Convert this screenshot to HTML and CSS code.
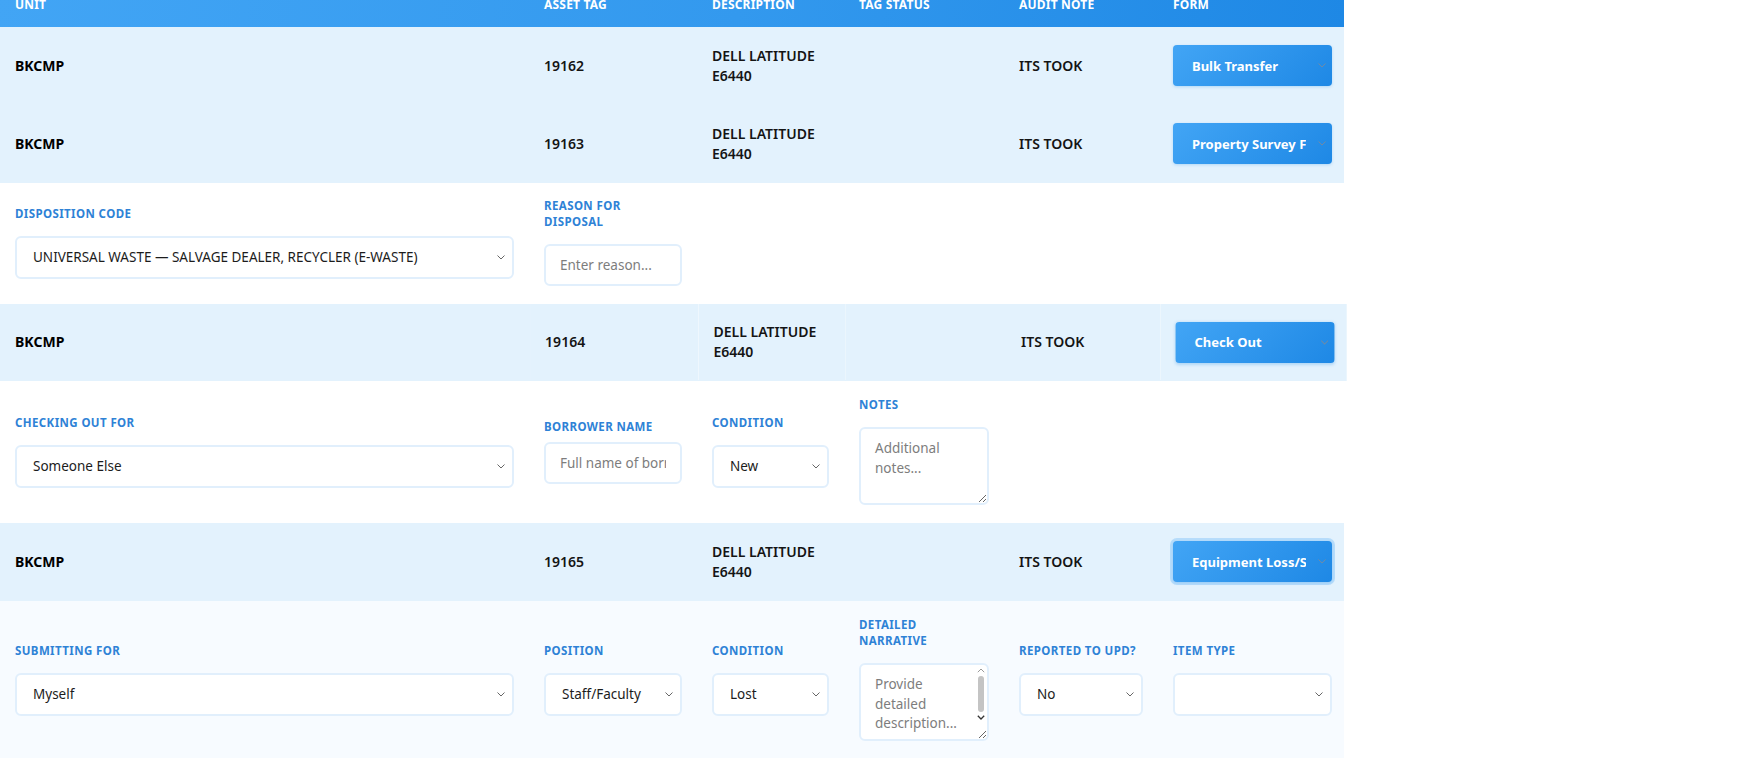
FILE: index.html
```html
<!DOCTYPE html>
<html lang="en">
<head>
<meta charset="utf-8">
<title>Asset Audit</title>
<link rel="stylesheet" href="styles.css">
</head>
<body>
<div class="page">
  <table class="grid">
    <colgroup>
      <col class="c-unit"><col class="c-tag"><col class="c-desc"><col class="c-status"><col class="c-note"><col class="c-form">
    </colgroup>
    <thead>
      <tr class="head">
        <th>Unit</th><th>Asset Tag</th><th>Description</th><th>Tag Status</th><th>Audit Note</th><th class="last">Form</th>
      </tr>
    </thead>
    <tbody>
      <tr class="row">
        <td class="unit">BKCMP</td><td>19162</td><td>DELL LATITUDE E6440</td><td></td><td>ITS TOOK</td>
        <td class="last"><select class="form-select"><option>Bulk Transfer</option></select></td>
      </tr>
      <tr class="row">
        <td class="unit">BKCMP</td><td>19163</td><td>DELL LATITUDE E6440</td><td></td><td>ITS TOOK</td>
        <td class="last"><select class="form-select"><option>Property Survey Form</option></select></td>
      </tr>
      <tr class="detail detail--compact">
        <td><label class="f-label">Disposition Code</label>
          <select class="field"><option>UNIVERSAL WASTE — SALVAGE DEALER, RECYCLER (E-WASTE)</option></select></td>
        <td><label class="f-label f-label--wrap">Reason for Disposal</label>
          <input class="field" type="text" placeholder="Enter reason..."></td>
        <td></td><td></td><td></td><td class="last"></td>
      </tr>
      <tr class="row is-hover">
        <td class="unit">BKCMP</td><td>19164</td><td>DELL LATITUDE E6440</td><td></td><td>ITS TOOK</td>
        <td class="last"><select class="form-select"><option>Check Out</option></select></td>
      </tr>
      <tr class="detail">
        <td><label class="f-label">Checking Out For</label>
          <select class="field"><option>Someone Else</option></select></td>
        <td><label class="f-label f-label--tight">Borrower Name</label>
          <input class="field" type="text" placeholder="Full name of borrower"></td>
        <td><label class="f-label">Condition</label>
          <select class="field"><option>New</option></select></td>
        <td><label class="f-label">Notes</label>
          <textarea class="field area" placeholder="Additional notes..."></textarea></td>
        <td></td><td class="last"></td>
      </tr>
      <tr class="row">
        <td class="unit">BKCMP</td><td>19165</td><td>DELL LATITUDE E6440</td><td></td><td>ITS TOOK</td>
        <td class="last"><select class="form-select is-focus"><option>Equipment Loss/Stolen</option></select></td>
      </tr>
      <tr class="detail detail--tint">
        <td><label class="f-label">Submitting For</label>
          <select class="field"><option>Myself</option></select></td>
        <td><label class="f-label">Position</label>
          <select class="field"><option>Staff/Faculty</option></select></td>
        <td><label class="f-label">Condition</label>
          <select class="field"><option>Lost</option></select></td>
        <td><label class="f-label f-label--wrap">Detailed Narrative</label>
          <div class="area-wrap">
            <textarea class="field area area--scroll" placeholder="Provide detailed description..."></textarea>
            <div class="fake-scroll" aria-hidden="true">
              <svg class="sb-arrow" width="8" height="5" viewBox="0 0 8 5"><path d="M0.8 4.2 L4 1 L7.2 4.2" fill="none" stroke="#9a9a9a" stroke-width="1"/></svg>
              <div class="sb-thumb"></div>
              <svg class="sb-arrow" width="8" height="5" viewBox="0 0 8 5"><path d="M0.8 0.8 L4 4 L7.2 0.8" fill="none" stroke="#333" stroke-width="1.3"/></svg>
            </div>
          </div></td>
        <td><label class="f-label">Reported to UPD?</label>
          <select class="field"><option>No</option></select></td>
        <td class="last"><label class="f-label">Item Type</label>
          <select class="field"><option></option></select></td>
      </tr>
    </tbody>
  </table>
</div>
</body>
</html>
```

FILE: styles.css
```css
html, body {
  margin: 0;
  padding: 0;
  background: #ffffff;
}

body {
  font-family: "Segoe UI", "Noto Sans", "Open Sans", sans-serif;
  color: #111;
}

.page {
  width: 1344px;
  margin-top: -17px;
}

.grid {
  width: 1344px;
  border-collapse: collapse;
  table-layout: fixed;
}

.c-unit { width: 529px; }
.c-tag { width: 168px; }
.c-desc { width: 147px; }
.c-status { width: 160px; }
.c-note { width: 154px; }
.c-form { width: 186px; }

.head {
  background: linear-gradient(100deg, #42a5f5 0%, #3399ee 55%, #1e88e5 100%);
}

.head th {
  padding: 14px 15px;
  line-height: 16px;
  font-size: 12px;
  font-weight: 700;
  letter-spacing: 0.2px;
  text-transform: uppercase;
  text-align: left;
  color: #fff;
}

.grid th.last,
.grid td.last {
  padding-right: 12px;
}

.row td {
  background: #e3f2fd;
  padding: 18px 15px;
  border-bottom: 1px solid #e3f2fd;
  font-size: 14px;
  line-height: 20px;
  font-weight: 600;
  color: #141414;
  vertical-align: middle;
}

.row td.unit {
  font-weight: 700;
  color: #000;
}

.row.is-hover {
  transform: scale(1.002);
  transform-origin: left center;
}

.detail td {
  background: #fff;
  padding: 16px 15px 17px;
  border-bottom: 1px solid #ffffff;
  vertical-align: middle;
}

.detail--compact td {
  padding-top: 15px;
  padding-bottom: 16px;
}

.detail--tint td {
  background: #f7fbff;
  border-bottom: 1px solid #e8f2fb;
}

.f-label {
  display: block;
  font-size: 11.5px;
  line-height: 16px;
  font-weight: 700;
  letter-spacing: 0.4px;
  text-transform: uppercase;
  color: #2e82d6;
  margin-bottom: 14px;
}

.f-label--tight {
  margin-bottom: 7px;
}

.f-label--wrap {
  max-width: 100px;
}

.field {
  display: block;
  width: 100%;
  box-sizing: border-box;
  border: 2px solid #e1effc;
  border-radius: 6px;
  background-color: #fff;
  font-family: "Segoe UI", "Noto Sans", "Open Sans", sans-serif;
  font-size: 13.5px;
  color: #1c1c1c;
  margin: 0;
  outline: none;
}

select.field {
  height: 43px;
  padding: 0 26px 0 16px;
  -webkit-appearance: none;
  appearance: none;
  background-image: url("data:image/svg+xml;utf8,<svg xmlns='http://www.w3.org/2000/svg' width='8' height='5' viewBox='0 0 8 5'><path d='M0.5 0.5 L4 4 L7.5 0.5' fill='none' stroke='%23666' stroke-width='1'/></svg>");
  background-repeat: no-repeat;
  background-position: right 7px center;
  background-size: 8px 5px;
}

input.field {
  height: 42px;
  padding: 0 14px;
}

.field::placeholder {
  color: #7d7d7d;
}

.area {
  height: 78px;
  padding: 9px 14px;
  line-height: 20px;
  resize: vertical;
}

.area-wrap {
  position: relative;
}

.area--scroll {
  overflow: hidden;
  padding-right: 22px;
  line-height: 19.5px;
  padding-top: 10px;
}

.fake-scroll {
  position: absolute;
  top: 5px;
  right: 3px;
  width: 11px;
  height: 52px;
  display: flex;
  flex-direction: column;
  align-items: center;
  gap: 3px;
}

.sb-arrow {
  display: block;
  flex: none;
}

.sb-thumb {
  flex: 1;
  width: 6px;
  border-radius: 3px;
  background: #c4c4c4;
}

.form-select {
  display: block;
  width: 100%;
  height: 41px;
  box-sizing: border-box;
  margin: 0;
  border: none;
  border-radius: 4px;
  padding: 0 26px 0 19px;
  font-family: "Segoe UI", "Noto Sans", "Open Sans", sans-serif;
  font-size: 13px;
  font-weight: 700;
  color: #fff;
  -webkit-appearance: none;
  appearance: none;
  background-image:
    url("data:image/svg+xml;utf8,<svg xmlns='http://www.w3.org/2000/svg' width='8' height='5' viewBox='0 0 8 5'><path d='M0.5 0.5 L4 4 L7.5 0.5' fill='none' stroke='%236f8aa6' stroke-width='1'/></svg>"),
    linear-gradient(135deg, #42a5f5 0%, #1e88e5 100%);
  background-repeat: no-repeat, no-repeat;
  background-position: right 6px center, 0 0;
  background-size: 8px 5px, 100% 100%;
  box-shadow: 0 1px 3px rgba(30, 136, 229, 0.25);
  outline: none;
}

.form-select.is-focus {
  box-shadow: 0 0 0 3px rgba(100, 181, 246, 0.35), 0 1px 3px rgba(30, 136, 229, 0.25);
}
```
